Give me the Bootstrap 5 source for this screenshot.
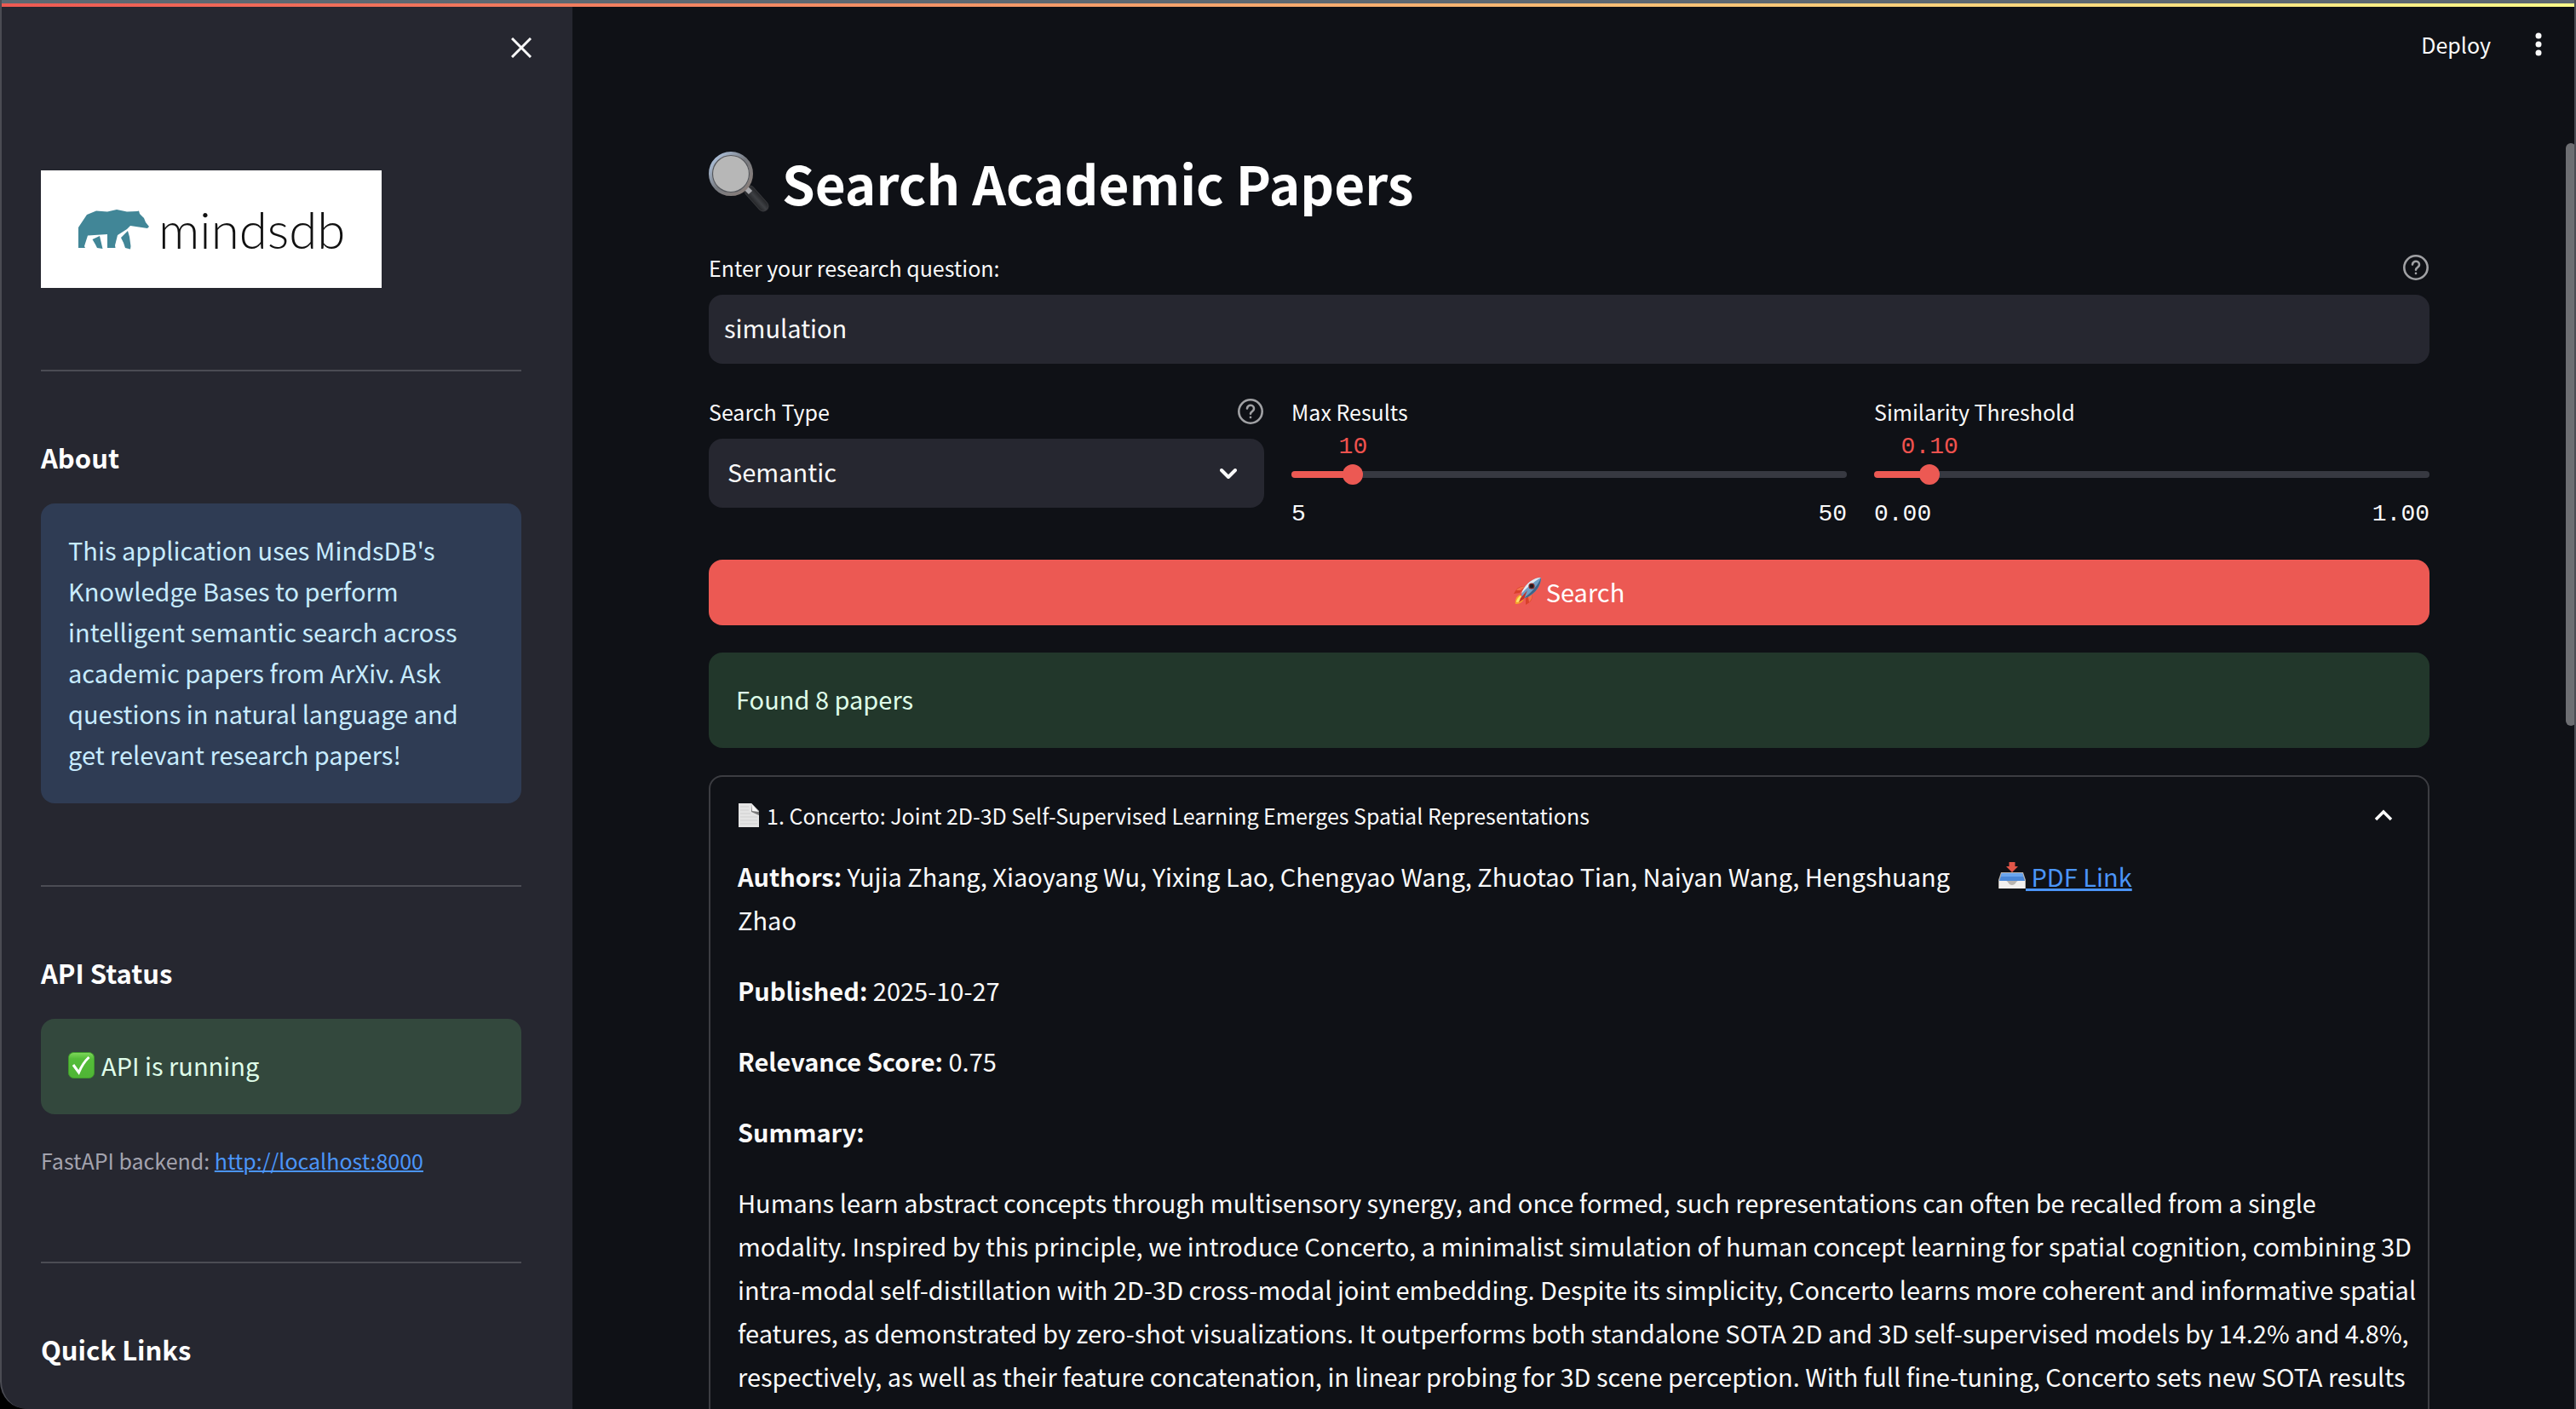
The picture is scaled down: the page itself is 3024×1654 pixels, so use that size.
<!DOCTYPE html>
<html lang="en" data-bs-theme="dark">
<head>
<meta charset="utf-8">
<meta name="viewport" content="width=device-width, initial-scale=1">
<title>Search Academic Papers</title>
<link href="https://cdn.jsdelivr.net/npm/bootstrap@5.3.0/dist/css/bootstrap.min.css" rel="stylesheet">
<style>
  :root { --ink:#fafafa; --panel:#262730; --coral:#ec5953; --page:#0f1116; --sans:"Noto Sans CJK SC","Noto Sans",sans-serif; --code:"Liberation Mono",monospace; }
  html { background:#000; }
  body { margin:0; height:100vh; overflow:hidden; background:var(--page); color:var(--ink); font-family:var(--sans); font-size:29px; line-height:48px; border-bottom-left-radius:32px; position:relative; }
  .window-edge { position:absolute; inset:0; border:solid #4b4c53; border-width:0 2px 0 2px; border-bottom-left-radius:32px; pointer-events:none; z-index:5; }
  .top-strip { position:absolute; top:0; left:0; right:0; height:8px; z-index:4; border-top:4px solid #5d6770; background:linear-gradient(90deg,#ee5a53,#fdfa8a) padding-box; }
  .side { width:672px; background:var(--panel); padding:0 60px 0 48px; }
  .side-top { height:200px; padding-top:44px; margin-right:-12px; }
  .icon-btn { background:none; border:0; padding:0; color:var(--ink); line-height:0; display:block; }
  .brand { width:400px; height:138px; background:#fff; color:#111; padding:0 0 0 44px; gap:10px; font-family:Lato,sans-serif; font-weight:300; font-size:60px; line-height:138px; }
  .rule { height:2px; background:#4b4c54; border:0; opacity:1; margin:96px 0 0; }
  .side h2 { font-size:31px; line-height:48px; font-weight:700; margin:77px 0 0; padding-bottom:30px; }
  .note-box { border-radius:16px; padding:30px 32px 34px; margin:0; border:0; line-height:48px; }
  .note-info { background:#2f3c54; color:#c7ebff; }
  .note-ok { background:#33483d; color:#dffde9; }
  .note-found { background:#22372b; color:#dffde9; margin-top:32px; }
  .hint { font-size:25px; line-height:45px; margin:32px 0 0; color:#a3a3ae; }
  .bright-link { color:#4b95f8; text-decoration:underline; text-decoration-thickness:2px; }
  .main-area { padding:0 172px 0 160px; min-width:0; }
  .topbar { height:96px; padding:8px 0 0; margin-right:-136px; font-size:25px; gap:48px; }
  .plain-btn { background:none; border:0; padding:0; color:inherit; font:inherit; }
  h1 { font-size:62px; line-height:88px; font-weight:700; margin:74px 0 36px; gap:14px; }
  .field-label { font-size:25px; line-height:40px; margin:0; }
  .field-box { height:81px; border:0; border-radius:16px; background-color:var(--panel); color:var(--ink); font-size:29px; line-height:48px; padding:14px 18px 19px; margin-top:12px; width:100%; display:block; }
  select.field-box { appearance:none; padding-left:22px; }
  .select-holder { position:relative; }
  .select-holder svg { position:absolute; right:32px; top:35px; pointer-events:none; }
  .controls { display:grid; grid-template-columns:repeat(3,minmax(0,1fr)); gap:32px; margin-top:36px; }
  .slide-value { color:#f0524e; font-family:var(--code); font-size:28px; line-height:44px; height:42px; }
  .slide-value span { display:inline-block; transform:translateX(-50%); }
  .slide-ends { font-family:var(--code); font-size:28px; line-height:40px; margin-top:15px; }
  .slide { -webkit-appearance:none; appearance:none; position:relative; display:block; width:calc(100% + 24px); margin:0 -12px; height:24px; background:transparent; }
  .slide-track { position:relative; }
  .slide-track::before { content:""; position:absolute; left:0; right:0; top:8px; height:8px; border-radius:4px; background:linear-gradient(90deg,var(--coral) var(--at),#373941 var(--at)); }
  .slide::-webkit-slider-runnable-track { height:24px; background:transparent; }
  .slide::-webkit-slider-thumb { -webkit-appearance:none; width:24px; height:24px; border-radius:50%; background:var(--coral); border:0; }
  .go-btn { height:77px; border:0; border-radius:16px; background:var(--coral); color:#fff; font-size:29px; line-height:48px; gap:6px; padding:0 0 4px; margin-top:33px; }
  .paper { border:2px solid #3c3d42; border-radius:16px; background:transparent; margin-top:32px; padding:0 32px; height:900px; }
  .paper-head { font-size:25px; line-height:40px; padding:25px 0 26px; gap:8px; }
  .paper p { line-height:51px; margin:0 0 32px; }
  .paper-cols { display:grid; grid-template-columns:minmax(0,3fr) minmax(0,1fr); gap:32px; }
  .paper-link { padding-left:8px; }
  .paper-link .bright-link { text-decoration-thickness:3px; }
  .paper-link svg { vertical-align:-3px; }
  .paper .summary { margin-right:-24px; }
  .thumb-bar { position:absolute; right:0; top:168px; width:12px; height:684px; border-radius:6px; background:#6d6e72; z-index:3; }
</style>
<script src="https://cdn.jsdelivr.net/npm/bootstrap@5.3.0/dist/js/bootstrap.bundle.min.js" defer></script>
</head>
<body>
<div class="top-strip"></div>
<div class="d-flex h-100">
  <aside class="side flex-shrink-0 h-100 overflow-hidden">
    <div class="side-top d-flex justify-content-end align-items-start">
      <button class="icon-btn" aria-label="Close sidebar"><svg width="24" height="24" viewBox="0 0 24 24" fill="none" stroke="currentColor" stroke-width="3"><path d="M1 1l22 22M23 1L1 23"/></svg></button>
    </div>
    <div class="brand d-flex align-items-center">
      <svg width="84" height="47" viewBox="0 0 84 47" fill="#418697"><path d="M0 21L10 6 21 1.500 34 2.500 45 0 57 2.500 69 2 71 1.500 72 5 77 10 79 15 83 20 81 22 71 20.500 61 19 57 23 46 30 43 42 43.500 45H34V29L11 30.500 7 43 8 45H0z"/><path d="M25 31L28 44 28.500 46 22 45 20 41 16.500 35z"/><path d="M58 25L60 32 61.500 43 61 46.500 55 45 53 39 50 33z"/></svg>
      <span>mindsdb</span>
    </div>
    <hr class="rule">
    <h2>About</h2>
    <div class="note-box note-info">This application uses MindsDB's Knowledge Bases to perform intelligent semantic search across academic papers from ArXiv. Ask questions in natural language and get relevant research papers!</div>
    <hr class="rule">
    <h2>API Status</h2>
    <div class="note-box note-ok d-flex align-items-center gap-2">
      <svg width="31" height="31" viewBox="0 0 31 31"><defs><linearGradient id="tick" x2="0" y2="1"><stop offset="0" stop-color="#7fd95b"/><stop offset=".25" stop-color="#55bd39"/><stop offset="1" stop-color="#4fb535"/></linearGradient></defs><rect x=".5" y=".5" width="30" height="30" rx="6" fill="url(#tick)" stroke="#3f9a2c"/><path d="M6 15l6.500 9Q17 13 24.500 6" fill="none" stroke="#fff" stroke-width="3"/></svg>
      <span>API is running</span>
    </div>
    <p class="hint">FastAPI backend: <a class="bright-link" href="http://localhost:8000">http://localhost:8000</a></p>
    <hr class="rule">
    <h2>Quick Links</h2>
  </aside>
  <main class="main-area flex-grow-1 h-100 overflow-hidden">
    <div class="topbar d-flex justify-content-end align-items-center">
      <button class="plain-btn">Deploy</button>
      <button class="icon-btn" aria-label="Menu"><svg width="16" height="28" viewBox="0 0 16 28" fill="currentColor"><circle cx="8" cy="4" r="3.500"/><circle cx="8" cy="14" r="3.500"/><circle cx="8" cy="24" r="3.500"/></svg></button>
    </div>
    <h1 class="d-flex align-items-center">
      <svg width="72" height="72" viewBox="0 0 72 72"><defs><linearGradient id="rim" x2="1" y2="1"><stop offset="0" stop-color="#b9d0ee"/><stop offset=".5" stop-color="#777a80"/><stop offset="1" stop-color="#8d7f78"/></linearGradient><linearGradient id="grip" x1="0" y1="1" x2="1" y2="0"><stop offset="0" stop-color="#0a0a0c"/><stop offset=".5" stop-color="#3e4044"/><stop offset="1" stop-color="#0a0a0c"/></linearGradient></defs><path d="M48 46L64 64" stroke="#38393d" stroke-width="13" stroke-linecap="round"/><path d="M48 46L64 64" stroke="url(#grip)" stroke-width="11" stroke-linecap="round"/><path d="M42 41l7 7" stroke="#a9a9ad" stroke-width="6"/><circle cx="26" cy="26" r="24" fill="#b7b7b7" stroke="url(#rim)" stroke-width="4"/><circle cx="26" cy="26" r="21.500" fill="none" stroke="#55575c" stroke-width="1.200"/></svg>
      <span>Search Academic Papers</span>
    </h1>
    <div class="d-flex justify-content-between align-items-center">
      <label class="field-label" for="question">Enter your research question:</label>
      <svg width="32" height="32" viewBox="0 0 32 32" fill="none" stroke="#a0a1a4" stroke-width="2.600" stroke-linecap="round" stroke-linejoin="round"><circle cx="16" cy="16" r="13.700"/><path d="M12 12.500a4 4 0 0 1 8 .6c0 2.600-4 3.200-4 5.600"/><path d="M16 22.800v.1"/></svg>
    </div>
    <input id="question" class="field-box" type="text" value="simulation">
    <div class="controls">
      <div>
        <div class="d-flex justify-content-between align-items-center">
          <label class="field-label" for="kind">Search Type</label>
          <svg width="32" height="32" viewBox="0 0 32 32" fill="none" stroke="#a0a1a4" stroke-width="2.600" stroke-linecap="round" stroke-linejoin="round"><circle cx="16" cy="16" r="13.700"/><path d="M12 12.500a4 4 0 0 1 8 .6c0 2.600-4 3.200-4 5.600"/><path d="M16 22.800v.1"/></svg>
        </div>
        <div class="select-holder"><select id="kind" class="field-box"><option>Semantic</option></select><svg width="20" height="13" viewBox="0 0 20 13" fill="none" stroke="#fafafa" stroke-width="4" stroke-linecap="round" stroke-linejoin="round"><path d="M2 2l8 8 8-8"/></svg></div>
      </div>
      <div>
        <label class="field-label d-block" for="max">Max Results</label>
        <div class="slide-value"><span style="margin-left:11.110%">10</span></div>
        <div class="slide-track" style="--at:11.110%"><input id="max" class="slide" type="range" min="5" max="50" value="10"></div>
        <div class="slide-ends d-flex justify-content-between"><span>5</span><span>50</span></div>
      </div>
      <div>
        <label class="field-label d-block" for="threshold">Similarity Threshold</label>
        <div class="slide-value"><span style="margin-left:10%">0.10</span></div>
        <div class="slide-track" style="--at:10%"><input id="threshold" class="slide" type="range" min="0" max="1" step="0.01" value="0.1"></div>
        <div class="slide-ends d-flex justify-content-between"><span>0.00</span><span>1.00</span></div>
      </div>
    </div>
    <button class="go-btn btn w-100 d-flex justify-content-center align-items-center">
      <svg width="32" height="32" viewBox="0 0 32 32"><path d="M13 11C7 9 3 13 0 19l7-1zM21 19c2 6-1 10-7 13l0-8z" fill="#d8402b"/><path d="M13 11C9 10 5 12 3 15l5 0zM21 19c1 4 0 7-3 10l-1-6z" fill="#f2704a"/><path d="M7 20C3 22 1 27 2 31c5 0 8-2 10-6z" fill="#f6a02c"/><path d="M8 21C5 23 3 26 3 29c3 0 6-2 7-5z" fill="#fbe569"/><path d="M32 0c-8 0-17 6-22 16l-1 5 3 3 4-1C26 18 32 9 32 0z" fill="#6f9fc6"/><path d="M32 0c-8 0-17 6-22 16l-1 3C14 13 23 5 32 0z" fill="#e3ebf2"/><path d="M32 0c0 9-6 18-16 23l-4 1C20 18 28 10 32 0z" fill="#3f6488"/><circle cx="21" cy="10" r="3.600" fill="#7e2a27"/><circle cx="21" cy="10" r="2.300" fill="#1c1b22"/><path d="M8 24l8-9-4 10-6 4z" fill="#c1332a"/></svg>
      <span>Search</span>
    </button>
    <div class="note-box note-found">Found 8 papers</div>
    <section class="paper">
      <div class="paper-head d-flex align-items-center">
        <svg width="26" height="28" viewBox="0 0 26 28"><path d="M1 0h15l9 9v19H1z" fill="#e4e4e4"/><path d="M3 4h10M3 8h10M3 12h12M3 16h20M3 20h20M3 24h20" stroke="#cfcfcf"/><path d="M16 0v10l9 4V9z" fill="#777"/><path d="M16 0l9 10-8-1z" fill="#f8f8f8"/></svg>
        <span>1. Concerto: Joint 2D-3D Self-Supervised Learning Emerges Spatial Representations</span>
        <button class="icon-btn ms-auto me-2" aria-label="Collapse"><svg width="24" height="16" viewBox="0 0 24 16" fill="none" stroke="currentColor" stroke-width="3.500"><path d="M3 13l9-9 9 9"/></svg></button>
      </div>
      <div class="paper-cols">
        <div>
          <p><b>Authors:</b> <span>Yujia Zhang, Xiaoyang Wu, Yixing Lao, Chengyao Wang, Zhuotao Tian, Naiyan Wang, Hengshuang Zhao</span></p>
          <p><b>Published:</b> 2025-10-27</p>
          <p><b>Relevance Score:</b> 0.75</p>
          <p><b>Summary:</b></p>
        </div>
        <p class="paper-link"><a class="bright-link" href="#pdf"><svg width="32" height="32" viewBox="0 0 32 32"><path d="M12.500 0h7v5H23l-7 7-7-7h3.500z" fill="#e25548"/><path d="M3 12h26l3 9v10H0V21z" fill="#b9b5b0"/><path d="M4 13h24l3 9H1z" fill="#4a88d8"/><path d="M4 13h24l1 4H3z" fill="#6aa5ee"/><path d="M1 22h8c2 0 3 5 7 5s5-5 7-5h8v9H1z" fill="#f2f0ee"/></svg> PDF Link</a></p>
      </div>
      <p class="summary">Humans learn abstract concepts through multisensory synergy, and once formed, such representations can often be recalled from a single modality. Inspired by this principle, we introduce Concerto, a minimalist simulation of human concept learning for spatial cognition, combining 3D intra-modal self-distillation with 2D-3D cross-modal joint embedding. Despite its simplicity, Concerto learns more coherent and informative spatial features, as demonstrated by zero-shot visualizations. It outperforms both standalone SOTA 2D and 3D self-supervised models by 14.2% and 4.8%, respectively, as well as their feature concatenation, in linear probing for 3D scene perception. With full fine-tuning, Concerto sets new SOTA results</p>
    </section>
  </main>
</div>
<div class="thumb-bar"></div>
<div class="window-edge"></div>
</body>
</html>
